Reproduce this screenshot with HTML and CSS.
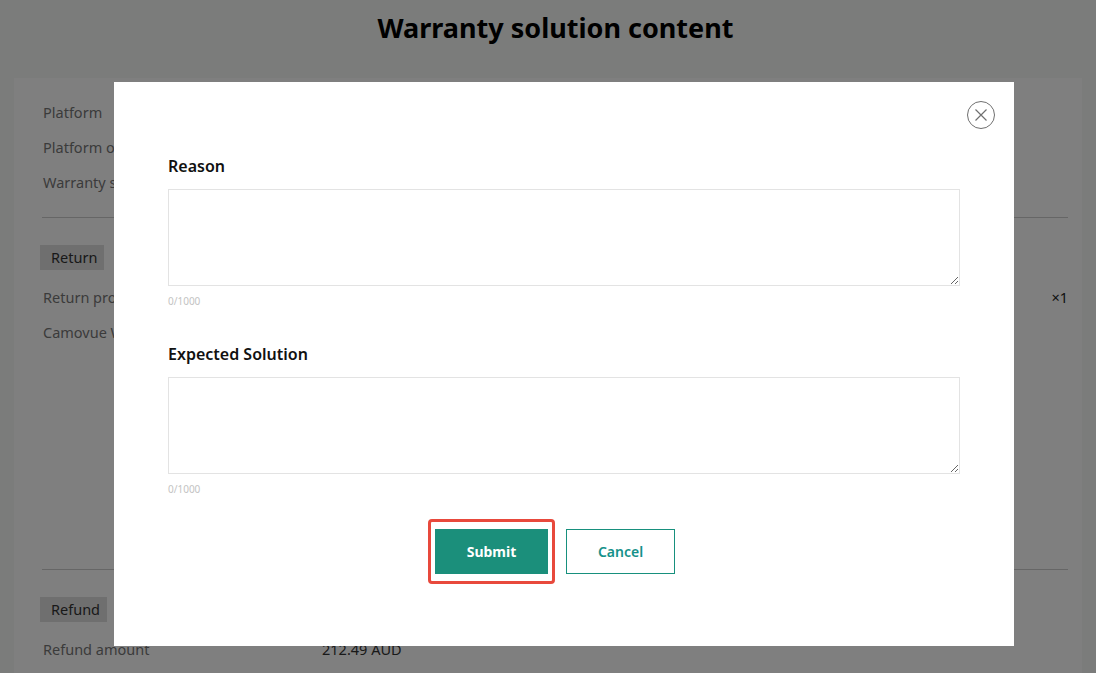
FILE: index.html
```html
<!DOCTYPE html>
<html>
<head>
	<title>Warranty solution content</title>
	<link rel="stylesheet" href="styles.css">
</head>
<body>
<h1 class="title">Warranty solution content</h1>
<div class="card">
	<div class="row">Platform</div>
	<div class="row">Platform order number</div>
	<div class="row">Warranty solution</div>
	<div class="line"></div>
	<span class="tag">Return</span>
	<div class="row split"><span>Return product</span><span class="qty">×1</span></div>
	<div class="row product">Camovue Wireless Security Camera</div>
	<div class="line"></div>
	<span class="tag">Refund</span>
	<div class="row split"><span class="key">Refund amount</span><span class="val">212.49 AUD</span></div>
</div>

<div class="mask">
	<div class="dialog">
		<button class="close">
			<svg width="30" height="30" viewBox="0 0 30 30">
				<circle cx="15" cy="15" r="13.5" fill="none" stroke="#6f6f6f" stroke-width="1"/>
				<path d="M9.5 9.5 L20.5 20.5 M20.5 9.5 L9.5 20.5" stroke="#6f6f6f" stroke-width="1.2" fill="none"/>
			</svg>
		</button>
		<div class="label">Reason</div>
		<textarea class="box"></textarea>
		<div class="count">0/1000</div>
		<div class="label second">Expected Solution</div>
		<textarea class="box"></textarea>
		<div class="count">0/1000</div>
		<div class="actions">
			<span class="mark"><button class="btn submit">Submit</button></span>
			<button class="btn cancel">Cancel</button>
		</div>
	</div>
</div>
</body>
</html>
```

FILE: styles.css
```css
body{
	margin: 0;
	background: #f7f8f7;
	font-family: "Noto Sans", "Open Sans", sans-serif;
	height: 673px;
	overflow: hidden;
}
.title{
	margin: 0;
	height: 78px;
	padding: 10px 0 0 15px;
	box-sizing: border-box;
	text-align: center;
	font-size: 27px;
	line-height: 36px;
	font-weight: bold;
	color: #000;
}
.card{
	margin: 0 14px;
	background: white;
	padding: 22px 14px 0 29px;
	height: 595px;
}
.row{
	font-size: 14.5px;
	line-height: 24px;
	color: #777;
	margin-bottom: 11px;
}
.split{
	display: flex;
	justify-content: space-between;
}
.qty{
	color: #222;
}
.key{
	width: 279px;
}
.val{
	flex: 1;
	color: #333;
}
.product{
	height: 226px;
}
.line{
	height: 1px;
	background: #ccc;
	margin: 23px 0 27px -1px;
}
.tag{
	display: block;
	width: fit-content;
	background: #dedede;
	color: #333;
	font-size: 14.5px;
	line-height: 25px;
	padding: 0 7px 0 11px;
	margin: 0 0 15px -3px;
}
.mask{
	position: fixed;
	left: 0;
	top: 0;
	right: 0;
	bottom: 0;
	background: rgba(0,0,0,0.5);
}
.dialog{
	position: relative;
	width: 900px;
	height: 564px;
	margin: 82px 0 0 114px;
	background: white;
	box-sizing: border-box;
	padding: 72px 54px 0;
}
.close{
	position: absolute;
	top: 18px;
	right: 18px;
	padding: 0;
	border: none;
	background: none;
	width: 30px;
	height: 30px;
}
.label{
	font-size: 16px;
	line-height: 24px;
	font-weight: 600;
	color: #111;
}
.second{
	margin-top: 34px;
}
.box{
	display: block;
	width: 100%;
	height: 97px;
	box-sizing: border-box;
	margin-top: 11px;
	border: 1px solid #e3e3e3;
	outline: none;
	resize: vertical;
}
.count{
	font-size: 10px;
	line-height: 14px;
	color: #c3c3c3;
	margin-top: 8px;
}
.actions{
	display: flex;
	align-items: center;
	gap: 11px;
	margin-top: 23px;
	padding-left: 260px;
}
.mark{
	display: inline-block;
	border: 3px solid #e8493c;
	border-radius: 4px;
	padding: 7px 4px;
	line-height: 0;
}
.btn{
	height: 45px;
	font-family: "Noto Sans", "Open Sans", sans-serif;
	font-size: 14px;
	font-weight: bold;
	cursor: pointer;
}
.submit{
	width: 113px;
	background: #1b8f7b;
	color: white;
	border: none;
}
.cancel{
	width: 109px;
	background: white;
	color: #15918a;
	border: 1px solid #17907d;
	font-weight: 600;
}
```
